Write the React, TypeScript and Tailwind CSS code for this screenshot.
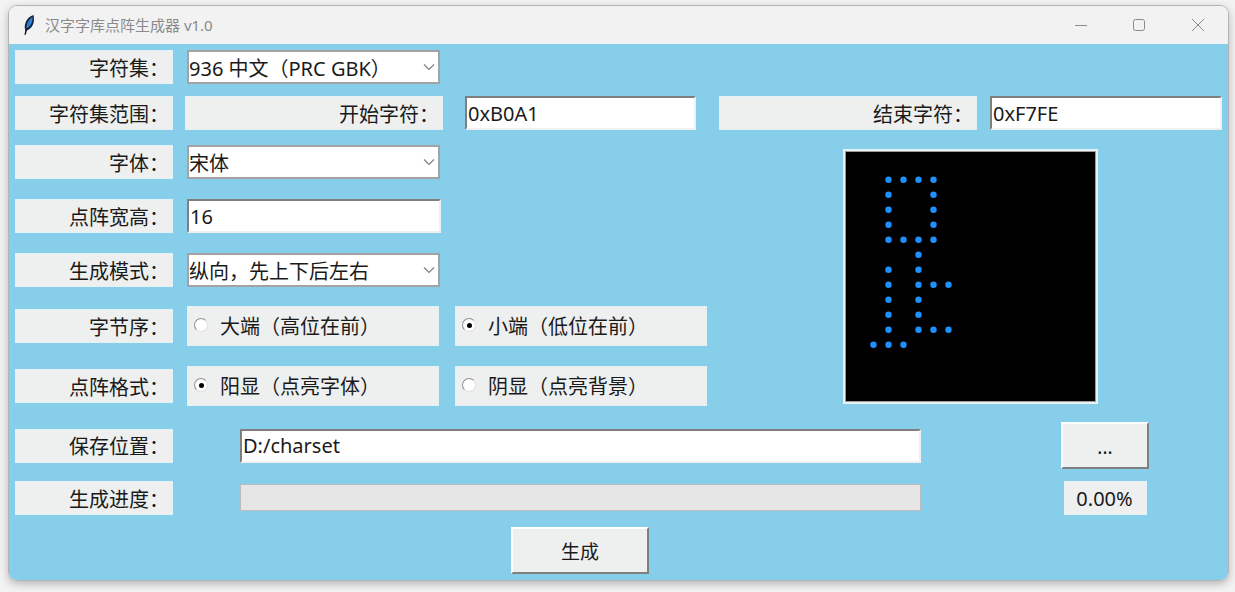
const uiFont = { fontFamily: '"Noto Sans", "Noto Sans CJK SC", sans-serif' };

const dots: [number, number][] = [
  [1, 0], [2, 0], [3, 0], [4, 0],
  [1, 1], [4, 1],
  [1, 2], [4, 2],
  [1, 3], [4, 3],
  [1, 4], [2, 4], [3, 4], [4, 4],
  [3, 5],
  [1, 6], [3, 6],
  [1, 7], [3, 7], [4, 7], [5, 7],
  [1, 8], [3, 8],
  [1, 9], [3, 9],
  [1, 10], [3, 10], [4, 10], [5, 10],
  [0, 11], [1, 11], [2, 11],
];

function Label({ text, className }: { text: string; className?: string }) {
  return (
    <div
      className={`flex h-[34px] w-[158px] shrink-0 items-center justify-end border border-[#e4f1f6] bg-[#eeefef] pr-[3px] pt-[3px] text-[20px] text-[#1a1a1a] ${className ?? ''}`}
    >
      {text}
    </div>
  );
}

function Entry({ value, className }: { value: string; className?: string }) {
  return (
    <div
      className={`flex h-[34px] shrink-0 items-center border-2 border-t-[#7f7f7f] border-l-[#7f7f7f] border-r-[#f0f0f0] border-b-[#f0f0f0] bg-white pl-[1px] pt-[1px] text-[20px] text-[#1a1a1a] ${className ?? ''}`}
    >
      {value}
    </div>
  );
}

function Combo({ value }: { value: string }) {
  return (
    <div className="ml-[14px] flex h-[34px] w-[253px] shrink-0 items-center justify-between border-2 border-[#a3a3a3] bg-white pr-[3px] pt-[3px] text-[20px] text-[#1a1a1a]">
      <span>{value}</span>
      <svg className="mb-[3px]" width="12" height="8" viewBox="0 0 12 8" fill="none" stroke="#808080" strokeWidth="1.2">
        <path d="M1 1.5 L6 6.5 L11 1.5" />
      </svg>
    </div>
  );
}

function Radio({ text, checked, className }: { text: string; checked?: boolean; className?: string }) {
  return (
    <div
      className={`flex h-[40px] w-[252px] shrink-0 items-center border border-[#e4f1f6] bg-[#eeefef] pl-[6px] pt-[2px] text-[20px] text-[#1a1a1a] ${className ?? ''}`}
    >
      <span className="mb-[4px] mr-[12px] flex size-[14px] items-center justify-center rounded-full border border-t-[#8f8f8f] border-l-[#8f8f8f] border-r-[#e0e0e0] border-b-[#e0e0e0] bg-white">
        {checked ? <span className="size-[5px] rounded-full bg-black" /> : null}
      </span>
      <span>{text}</span>
    </div>
  );
}

function RaisedButton({ text, className }: { text: string; className?: string }) {
  return (
    <div
      className={`flex h-[47px] shrink-0 items-center justify-center border-2 border-t-white border-l-white border-r-[#7f7f7f] border-b-[#7f7f7f] bg-[#eeefef] pt-[3px] text-[19px] text-[#1a1a1a] ${className ?? ''}`}
    >
      {text}
    </div>
  );
}

export default function App() {
  return (
    <div className="h-[592px] w-[1235px] overflow-hidden bg-[#f3f3f3] pl-[8px] pt-[5px]" style={uiFont}>
      <div className="flex h-[576px] w-[1221px] flex-col overflow-hidden rounded-[9px] border border-[#b4b4b4] shadow-[0_3px_8px_rgba(0,0,0,0.25)]">
        <div className="flex h-[38px] shrink-0 items-center bg-[#f2f2f2]">
          <svg className="ml-[13px]" width="14" height="22" viewBox="0 0 14 22">
            <path d="M2.5 21 L3.2 16 C1.5 10 5 3 11.5 1 C12.8 7 11.5 14 5 16.5 L3.6 21 Z" fill="#141f38" />
            <path d="M4.5 14.5 C4.2 9.5 6.8 5 10.5 3 C11 7.5 9 12 4.5 14.5 Z" fill="#2f7fd6" />
          </svg>
          <span className="ml-[9px] text-[15px] text-[#8a8a8a]">汉字字库点阵生成器 v1.0</span>
          <div className="ml-auto flex items-center">
            <svg width="14" height="14" viewBox="0 0 14 14" fill="none" stroke="#8a8a8a" strokeWidth="1">
              <path d="M1 7.5 H13" />
            </svg>
            <svg className="ml-[44px]" width="14" height="14" viewBox="0 0 14 14" fill="none" stroke="#8a8a8a" strokeWidth="1">
              <rect x="1.5" y="1.5" width="11" height="11" rx="2" />
            </svg>
            <svg className="ml-[45px] mr-[23px]" width="14" height="14" viewBox="0 0 14 14" fill="none" stroke="#8a8a8a" strokeWidth="1">
              <path d="M1 1 L13 13 M13 1 L1 13" />
            </svg>
          </div>
        </div>

        <div className="flex-1 bg-[#87ceeb] pl-[6px] pt-[6px]">
          <div className="flex">
            <Label text="字符集：" />
            <Combo value="936 中文（PRC GBK）" />
          </div>

          <div className="mt-[12px] flex">
            <Label text="字符集范围：" />
            <Label text="开始字符：" className="ml-[12px] w-[258px]" />
            <Entry value="0xB0A1" className="ml-[22px] w-[231px]" />
            <Label text="结束字符：" className="ml-[23px] w-[258px]" />
            <Entry value="0xF7FE" className="ml-[13px] w-[232px]" />
          </div>

          <div className="mt-[15px] flex">
            <div className="w-[692px] shrink-0">
              <div className="flex">
                <Label text="字体：" />
                <Combo value="宋体" />
              </div>
              <div className="mt-[20px] flex">
                <Label text="点阵宽高：" />
                <Entry value="16" className="ml-[14px] w-[254px]" />
              </div>
              <div className="mt-[20px] flex">
                <Label text="生成模式：" />
                <Combo value="纵向，先上下后左右" />
              </div>
              <div className="mt-[19px] flex items-center">
                <Label text="字节序：" />
                <Radio text="大端（高位在前）" className="ml-[14px]" />
                <Radio text="小端（低位在前）" checked className="ml-[16px]" />
              </div>
              <div className="mt-[20px] flex items-center">
                <Label text="点阵格式：" />
                <Radio text="阳显（点亮字体）" checked className="ml-[14px]" />
                <Radio text="阴显（点亮背景）" className="ml-[16px]" />
              </div>
            </div>

            <div className="ml-[136px] mt-[4px] size-[255px] shrink-0 border-2 border-[#e8f2f6] bg-black">
              <svg width="251" height="251" viewBox="0 0 251 251">
                <rect x="0.5" y="0.5" width="250" height="250" fill="none" stroke="#9a9a9a" />
                {dots.map(([col, row]) => (
                  <circle key={`${col}-${row}`} cx={28.5 + col * 15} cy={28.7 + row * 15} r="3.2" fill="#1e90ff" />
                ))}
              </svg>
            </div>
          </div>

          <div className="mt-[16px] flex items-center">
            <Label text="保存位置：" />
            <Entry value="D:/charset" className="ml-[67px] w-[681px]" />
            <RaisedButton text="..." className="ml-[140px] w-[88px]" />
          </div>

          <div className="mt-[12px] flex items-center">
            <Label text="生成进度：" />
            <div className="mb-[2px] ml-[67px] h-[27px] w-[681px] shrink-0 border border-[#bcbcbc] bg-[#e6e6e6]" />
            <div className="ml-[143px] flex h-[34px] w-[83px] shrink-0 items-center justify-center border border-[#e4f1f6] bg-[#eeefef] pr-[2px] pt-[1px] text-[20px] text-[#1a1a1a]">
              0.00%
            </div>
          </div>

          <RaisedButton text="生成" className="ml-[496px] mt-[12px] w-[138px]" />
        </div>
      </div>
    </div>
  );
}
